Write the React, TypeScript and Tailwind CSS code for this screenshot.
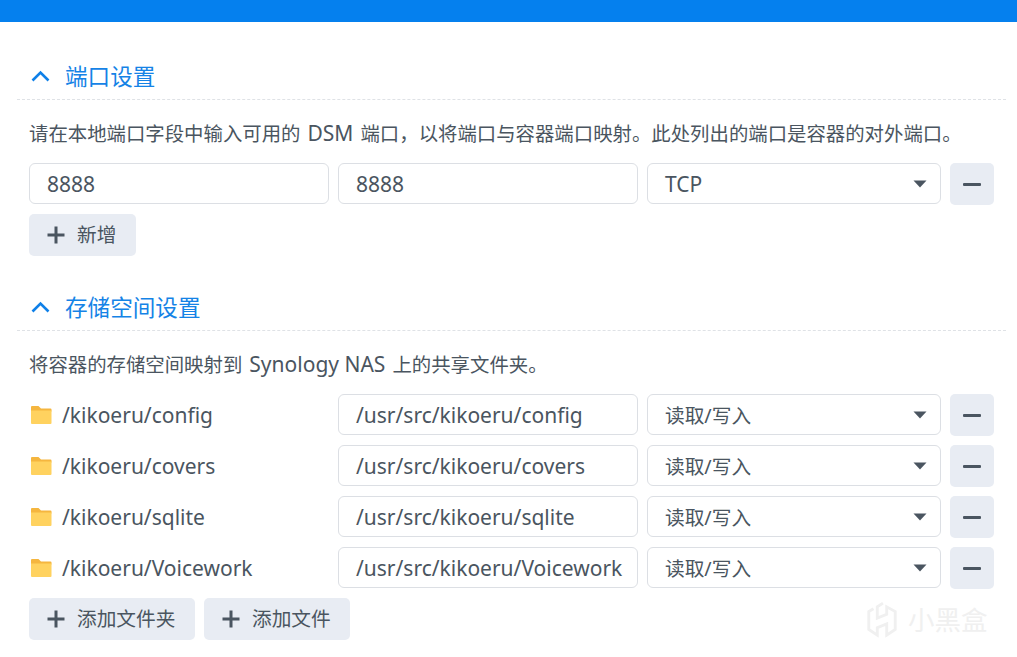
import React from "react";

function Caret() {
  return (
    <svg width="14" height="8" viewBox="0 0 14 8" className="shrink-0">
      <path d="M0.500 0.500h13L7 7.500z" fill="#4a5560" />
    </svg>
  );
}

function Minus() {
  return (
    <button className="w-[44px] h-[42px] rounded-[5px] bg-[#e8ecf3] flex items-center justify-center shrink-0">
      <span className="block w-[18px] h-[3px] bg-[#4a5560] rounded-[1px]" />
    </button>
  );
}

function Plus() {
  return (
    <svg width="18" height="18" viewBox="0 0 18 18" className="shrink-0">
      <path d="M9 0.500v17M0.500 9h17" stroke="#4a5560" strokeWidth="3" />
    </svg>
  );
}

function AddButton({ label, w }: { label: string; w: string }) {
  return (
    <button className={`${w} h-[42px] rounded-[5px] bg-[#e8ecf3] flex items-center pl-[18px] gap-[12px] text-[19.7px] text-[#4a5560]`}>
      <Plus />
      <span>{label}</span>
    </button>
  );
}

function Field({ value }: { value: string }) {
  return (
    <div className="h-[41px] border border-[#dcdfe4] rounded-[6px] bg-white flex items-center pl-[17px] text-[21px] text-[#4a5560] whitespace-nowrap overflow-hidden">
      <span className="mt-[2px]">{value}</span>
    </div>
  );
}

function Select({ value, small }: { value: string; small?: boolean }) {
  return (
    <div className={`h-[41px] border border-[#dcdfe4] rounded-[6px] bg-white flex items-center justify-between pl-[17px] pr-[13px] text-[#4a5560] ${small ? "text-[19.7px]" : "text-[21px]"}`}>
      <span className="mt-[2px]">{value}</span>
      <Caret />
    </div>
  );
}

function Header({ label }: { label: string }) {
  return (
    <div className="mx-[17px] w-[989px] h-[39px] border-b border-dashed border-[#dfe2e6] flex items-start pl-[14px] gap-[15px] text-[#1583e6]">
      <svg width="19" height="12" viewBox="0 0 19 12" className="mt-[9px] shrink-0">
        <path d="M1.500 10.500L9.500 2.500L17.500 10.500" fill="none" stroke="#0f80e8" strokeWidth="2.600" />
      </svg>
      <span className="text-[22.6px] leading-[32px]">{label}</span>
    </div>
  );
}

function Latin({ children }: { children: React.ReactNode }) {
  return <span className="text-[21px] leading-none mx-[2px]">{children}</span>;
}

const rows = [
  ["/kikoeru/config", "/usr/src/kikoeru/config"],
  ["/kikoeru/covers", "/usr/src/kikoeru/covers"],
  ["/kikoeru/sqlite", "/usr/src/kikoeru/sqlite"],
  ["/kikoeru/Voicework", "/usr/src/kikoeru/Voicework"],
];

function Folder() {
  return (
    <svg width="22" height="19" viewBox="0 0 22 19" className="shrink-0">
      <path d="M1 2a1 1 0 0 1 1-1h6.500l2.500 2.500h9.500a1 1 0 0 1 1 1v2H1z" fill="#f5b63f" />
      <path d="M1 5.500h20.500V18a1 1 0 0 1-1 1H2a1 1 0 0 1-1-1z" fill="#ffd25f" />
    </svg>
  );
}

export default function App() {
  return (
    <div className="w-[1017px] h-[657px] overflow-hidden bg-white relative font-['Noto_Sans','Noto_Sans_CJK_SC',sans-serif]">
      <div className="h-[22px] bg-[#0580ee]" />
      <div className="pt-[39px]">
        <Header label="端口设置" />
        <p className="ml-[29px] mt-[19px] h-[30px] text-[19.4px] leading-[30px] text-[#4a5560] whitespace-nowrap">
          请在本地端口字段中输入可用的 <Latin>DSM</Latin> 端口，以将端口与容器端口映射。此处列出的端口是容器的对外端口。
        </p>
        <div className="ml-[29px] mt-[14px] grid grid-cols-[300px_300px_294px_44px] gap-x-[9px]">
          <Field value="8888" />
          <Field value="8888" />
          <Select value="TCP" />
          <Minus />
        </div>
        <div className="ml-[29px] mt-[9px]">
          <AddButton label="新增" w="w-[107px]" />
        </div>

        <div className="mt-[36px]">
          <Header label="存储空间设置" />
        </div>
        <p className="ml-[29px] mt-[19px] h-[30px] text-[19.4px] leading-[30px] text-[#4a5560] whitespace-nowrap">
          将容器的存储空间映射到 <Latin>Synology NAS</Latin> 上的共享文件夹。
        </p>
        <div className="ml-[29px] mt-[14px] flex flex-col gap-y-[9px]">
          {rows.map(([a, b]) => (
            <div key={a} className="grid grid-cols-[300px_300px_294px_44px] gap-x-[9px]">
              <div className="h-[41px] flex items-center gap-[10px] pl-[1px] text-[21px] text-[#4a5560]">
                <Folder />
                <span className="mt-[2px]">{a}</span>
              </div>
              <Field value={b} />
              <Select value="读取/写入" small />
              <Minus />
            </div>
          ))}
        </div>
        <div className="ml-[29px] mt-[9px] flex gap-[9px]">
          <AddButton label="添加文件夹" w="w-[166px]" />
          <AddButton label="添加文件" w="w-[146px]" />
        </div>
      </div>
      <div className="absolute left-[865px] top-[600px] flex items-center gap-[9px] text-[#f0f0f0]">
        <svg width="34" height="42" viewBox="0 0 36 42" fill="none" stroke="#f0f0f0" strokeWidth="3">
          <path d="M19 2l-6 4v12l10-4V6l9 5v19l-9 6V24l-10 4v8L4 30V11l5-3" />
        </svg>
        <span className="text-[26.5px]">小黑盒</span>
      </div>
    </div>
  );
}
